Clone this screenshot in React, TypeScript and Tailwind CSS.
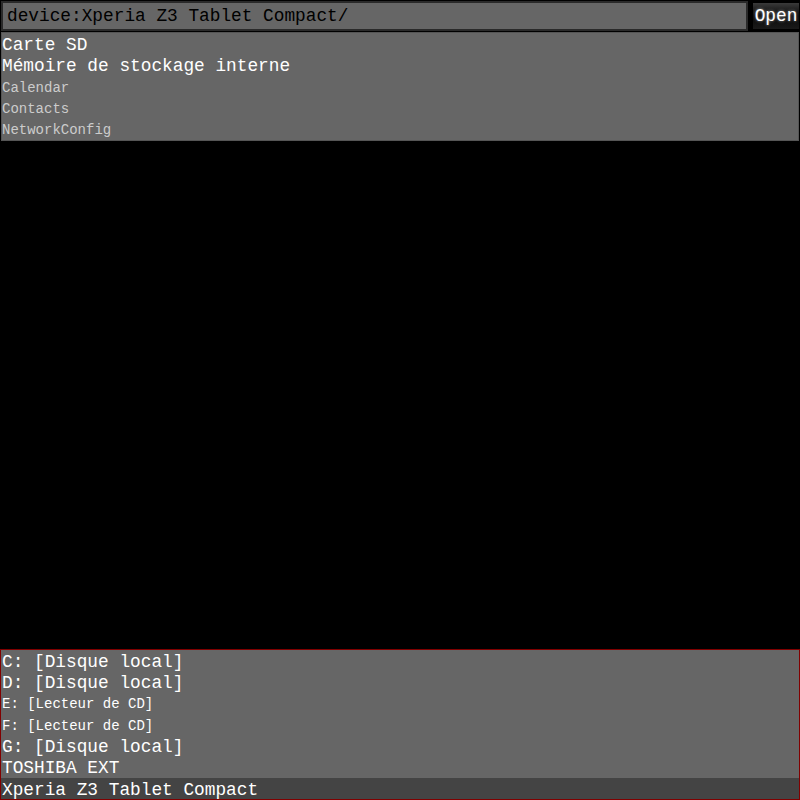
import React from "react";

const mono = { fontFamily: '"Courier New", Courier, "Liberation Mono", monospace' };

function Row({ text, small, dim, pad = "pl-[1px]" }: { text: string; small?: boolean; dim?: boolean; pad?: string }) {
  return (
    <div
      className={`h-[21.33px] pt-[4px] leading-[17.33px] ${pad} whitespace-pre ${small ? "text-[14px]" : "text-[17.8px]"} ${dim ? "text-[#cccccc]" : "text-white"}`}
    >
      {text}
    </div>
  );
}

export default function App() {
  return (
    <div className="w-[800px] h-[800px] bg-black flex flex-col overflow-hidden" style={mono}>
      <div className="flex items-start pt-[1px] pl-[1px]">
        <div className="w-[747px] h-[30px] border-2 border-[#2a2a2a] bg-[#666666] pl-[4px] text-[17.8px] leading-[26px] text-black whitespace-pre">
          device:Xperia Z3 Tablet Compact/
        </div>
        <div className="ml-[5px] mt-[2px] w-[46px] h-[26px] bg-gradient-to-b from-[#3a3a3a] via-[#0a0a0a] to-[#1a1a1a] text-white text-[17.8px] leading-[26px] text-center [text-shadow:0_0_3px_rgba(255,255,255,0.6)]">
          Open
        </div>
      </div>
      <div className="mt-[1px] mx-[1px] bg-[#666666] border border-[#555555] h-[109px]">
        <Row text="Carte SD" pad="pl-0" />
        <Row text="Mémoire de stockage interne" pad="pl-0" />
        <Row text="Calendar" small dim pad="pl-0" />
        <Row text="Contacts" small dim pad="pl-0" />
        <Row text="NetworkConfig" small dim pad="pl-0" />
      </div>
      <div className="flex-1" />
      <div className="border border-[#800000] bg-[#666666]">
        <Row text="C: [Disque local]" />
        <Row text="D: [Disque local]" />
        <Row text="E: [Lecteur de CD]" small />
        <Row text="F: [Lecteur de CD]" small />
        <Row text="G: [Disque local]" />
        <Row text="TOSHIBA EXT" />
        <div className="bg-[#444444]">
          <Row text="Xperia Z3 Tablet Compact" />
        </div>
      </div>
    </div>
  );
}
